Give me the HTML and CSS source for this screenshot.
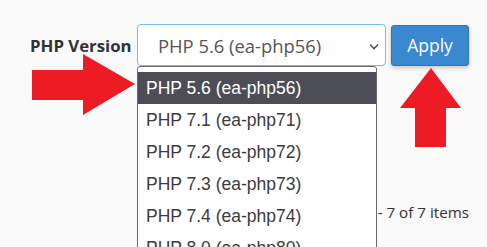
FILE: index.html
```html
<!DOCTYPE html>
<html lang="en">
<head>
  <meta charset="UTF-8">
  <title>PHP Version</title>
  <link rel="stylesheet" href="styles.css">
</head>
<body>
  <div class="page">
    <div class="version-row">
      <label class="version-label" for="php-version">PHP Version</label>
      <div class="select-box" id="php-version">
        <span>PHP 5.6 (ea-php56)</span>
        <svg class="chevron" width="10" height="7" viewBox="0 0 10 7"><path d="M1 1.5 L5 5.5 L9 1.5" fill="none" stroke="#555" stroke-width="1.6"/></svg>
      </div>
      <button class="button">Apply</button>
    </div>

    <div class="pager">1 - 7 of 7 items</div>

    <!-- open select list -->
    <ul class="dropdown">
      <li class="selected">PHP 5.6 (ea-php56)</li>
      <li>PHP 7.1 (ea-php71)</li>
      <li>PHP 7.2 (ea-php72)</li>
      <li>PHP 7.3 (ea-php73)</li>
      <li>PHP 7.4 (ea-php74)</li>
      <li>PHP 8.0 (ea-php80)</li>
      <li>PHP 8.1 (ea-php81)</li>
    </ul>

    <!-- annotation arrows -->
    <svg class="arrow arrow-right" width="104" height="62" viewBox="0 0 104 62">
      <polygon points="0,16 51,16 51,0 103,30 51,61 51,46 0,46" fill="#ed1c24"/>
    </svg>
    <svg class="arrow arrow-up" width="62" height="80" viewBox="0 0 62 80">
      <polygon points="31,0 61,40 46,40 46,79 15,79 15,40 0,40" fill="#ed1c24"/>
    </svg>
  </div>
</body>
</html>
```

FILE: styles.css
```css
html, body {
  margin: 0;
  background: #f9f9f9;
}
.page {
  position: relative;
  height: 247px;
  overflow: hidden;
  font-family: 'Open Sans', sans-serif;
  color: #333;
}
.version-row {
  display: flex;
  align-items: center;
  padding: 24px 0 0 30px;
}
.version-label {
  width: 107px;
  flex: none;
  white-space: nowrap;
  font-weight: bold;
  font-size: 16.8px;
}
.select-box {
  box-sizing: border-box;
  width: 249px;
  height: 42px;
  display: flex;
  align-items: center;
  justify-content: space-between;
  padding: 0 6px 0 20px;
  background: #fff;
  border: 1px solid #7fb6ea;
  border-radius: 4px;
  font-size: 18.4px;
  color: #555;
}
.chevron {
  margin-top: 2px;
}
.button {
  box-sizing: border-box;
  width: 78px;
  height: 41px;
  margin-left: 5px;
  background: #3a88cf;
  color: #fff;
  border: 1px solid #2f76b8;
  border-radius: 3px;
  font-family: 'Open Sans', sans-serif;
  font-size: 17.5px;
  box-shadow: 0 2px 4px rgba(0,0,0,0.2);
}
.pager {
  text-align: right;
  padding-right: 18px;
  margin-top: 136px;
  font-size: 15.2px;
}
.dropdown {
  position: absolute;
  left: 137px;
  top: 66px;
  width: 240px;
  box-sizing: border-box;
  margin: 0;
  padding: 5px 0 0;
  list-style: none;
  background: #fff;
  border: 1px solid #6b6b6b;
  border-radius: 3px 3px 0 0;
  font-family: 'Liberation Sans', Arial, sans-serif;
  font-size: 17.5px;
  color: #3b3b3b;
}
.dropdown li {
  height: 32px;
  line-height: 32px;
  padding-left: 8px;
}
.dropdown li.selected {
  background: #4d4d57;
  color: #fff;
}
.arrow {
  position: absolute;
}
.arrow-right {
  left: 32px;
  top: 54px;
}
.arrow-up {
  left: 400px;
  top: 68px;
}
```
